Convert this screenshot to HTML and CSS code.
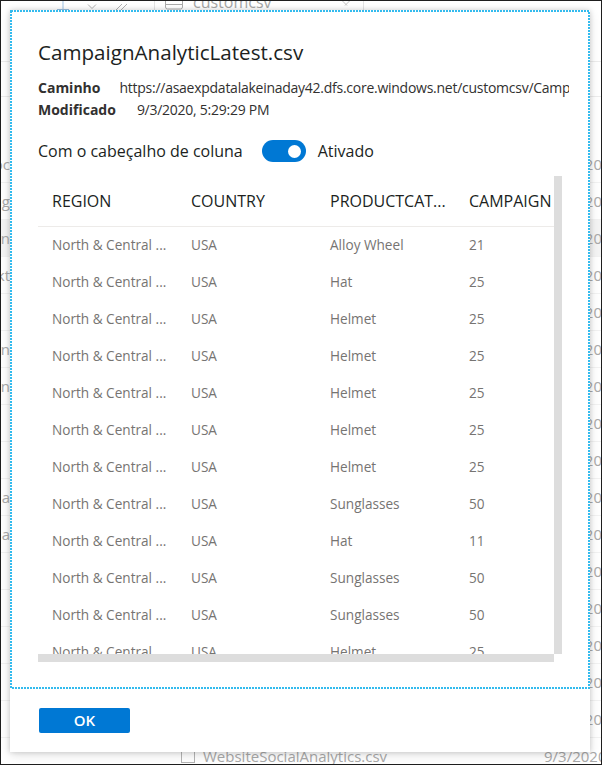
FILE: index.html
```html
<!DOCTYPE html>
<html lang="pt">
<head>
<meta charset="utf-8">
<title>CampaignAnalyticLatest.csv</title>
<link rel="stylesheet" href="styles.css">
</head>
<body>
<div class="screen">
  <div class="backdrop" aria-hidden="true">
    <div class="bg-toolbar">
      <svg class="ico ico-up" width="14" height="9" viewBox="0 0 14 9"><path d="M7 0V8M1 8.5H13" stroke="#9dc1e3" stroke-width="1" fill="none"/></svg>
      <svg class="ico ico-chev" width="10" height="9" viewBox="0 0 10 9"><path d="M1 3.5L5 7.5L9 3.5" stroke="#b0b0b0" stroke-width="1" fill="none"/></svg>
      <svg class="ico ico-edit" width="13" height="9" viewBox="0 0 13 9"><path d="M1 9L7 3M6 9L12 3" stroke="#b0b0b0" stroke-width="1" fill="none"/></svg>
      <span class="bg-div"></span>
      <svg class="ico ico-drive" width="18" height="9" viewBox="0 0 18 9"><rect x="0.5" y="-4" width="17" height="12" rx="2" stroke="#aaaaaa" fill="none"/><path d="M1 3.5H17" stroke="#aaaaaa"/></svg>
      <span class="bg-crumb">customcsv</span>
      <svg class="ico ico-x" width="8" height="9" viewBox="0 0 8 9"><path d="M0.5 0L5 4.5M7.5 0L3 4.5" stroke="#c0c0c0" fill="none"/></svg>
      <span class="bg-div"></span>
    </div>
    <div class="bg-head">
      <div class="bg-line bg-line-a"></div>
      <div class="bg-line bg-line-b"></div>
    </div>
    <div class="bg-rows">
      <div class="bg-row"><span class="bg-tail"><span>Saved Adhoc</span></span><span class="bg-date">2020</span></div>
      <div class="bg-row"><span class="bg-tail"><span>Billing</span></span><span class="bg-date">2020</span></div>
      <div class="bg-row bg-row-sel"><span class="bg-tail"><span>Campaign</span></span><span class="bg-date">2020</span></div>
      <div class="bg-row"><span class="bg-tail"><span>Mkt</span></span><span class="bg-date">2020</span></div>
      <div class="bg-row"><span class="bg-tail"><span></span></span><span class="bg-date">2020</span></div>
      <div class="bg-row"><span class="bg-tail"><span>Design</span></span><span class="bg-date">2020</span></div>
      <div class="bg-row"><span class="bg-tail"><span>Domain</span></span><span class="bg-date">2020</span></div>
      <div class="bg-row"><span class="bg-tail"><span></span></span><span class="bg-date">2020</span></div>
      <div class="bg-row"><span class="bg-tail"><span></span></span><span class="bg-date">2020</span></div>
      <div class="bg-row"><span class="bg-tail"><span>Fina</span></span><span class="bg-date">2020</span></div>
      <div class="bg-row"><span class="bg-tail"><span>Mana</span></span><span class="bg-date">2020</span></div>
      <div class="bg-row"><span class="bg-tail"><span></span></span><span class="bg-date">2020</span></div>
      <div class="bg-row"><span class="bg-tail"><span></span></span><span class="bg-date">2020</span></div>
      <div class="bg-row"><span class="bg-tail"><span></span></span><span class="bg-date">2020</span></div>
      <div class="bg-row"><span class="bg-tail"><span></span></span><span class="bg-date">2020</span></div>
      <div class="bg-row"><span class="bg-tail"><span></span></span><span class="bg-date">2020</span></div>
      <div class="bg-row bg-row-last"><span class="bg-tail"><span></span></span><span class="bg-check"></span><span class="bg-name">WebsiteSocialAnalytics.csv</span><span class="bg-date-full">9/3/2020</span></div>
    </div>
  </div>

  <div class="dialog" role="dialog" aria-label="CampaignAnalyticLatest.csv">
    <div class="focus">
      <svg class="focus-ring" aria-hidden="true"><rect class="ring-rect" x="1" y="1"/></svg>
      <h1 class="title">CampaignAnalyticLatest.csv</h1>
      <div class="meta">
        <div class="meta-row"><span class="meta-label">Caminho</span><span class="meta-value">https://asaexpdatalakeinaday42.dfs.core.windows.net/customcsv/Camp</span></div>
        <div class="meta-row"><span class="meta-label">Modificado</span><span class="meta-value">9/3/2020, 5:29:29 PM</span></div>
      </div>
      <div class="switch-row">
        <span class="switch-label">Com o cabeçalho de coluna</span>
        <span class="toggle" role="switch" aria-checked="true"><span class="knob"></span></span>
        <span class="switch-state">Ativado</span>
      </div>
      <div class="grid-frame">
        <div class="viewport">
          <table class="data">
            <thead>
              <tr><th>REGION</th><th>COUNTRY</th><th>PRODUCTCAT...</th><th>CAMPAIGN</th></tr>
            </thead>
            <tbody>
              <tr><td>North &amp; Central ...</td><td>USA</td><td>Alloy Wheel</td><td>21</td></tr>
              <tr><td>North &amp; Central ...</td><td>USA</td><td>Hat</td><td>25</td></tr>
              <tr><td>North &amp; Central ...</td><td>USA</td><td>Helmet</td><td>25</td></tr>
              <tr><td>North &amp; Central ...</td><td>USA</td><td>Helmet</td><td>25</td></tr>
              <tr><td>North &amp; Central ...</td><td>USA</td><td>Helmet</td><td>25</td></tr>
              <tr><td>North &amp; Central ...</td><td>USA</td><td>Helmet</td><td>25</td></tr>
              <tr><td>North &amp; Central ...</td><td>USA</td><td>Helmet</td><td>25</td></tr>
              <tr><td>North &amp; Central ...</td><td>USA</td><td>Sunglasses</td><td>50</td></tr>
              <tr><td>North &amp; Central ...</td><td>USA</td><td>Hat</td><td>11</td></tr>
              <tr><td>North &amp; Central ...</td><td>USA</td><td>Sunglasses</td><td>50</td></tr>
              <tr><td>North &amp; Central ...</td><td>USA</td><td>Sunglasses</td><td>50</td></tr>
              <tr><td>North &amp; Central ...</td><td>USA</td><td>Helmet</td><td>25</td></tr>
            </tbody>
          </table>
        </div>
        <div class="vbar"></div>
        <div class="hbar"></div>
        <div class="corner"></div>
      </div>
    </div>
    <div class="footer">
      <button class="ok" type="button">OK</button>
    </div>
  </div>
</div>
</body>
</html>
```

FILE: styles.css
```css
* { box-sizing: border-box; }

html, body {
  margin: 0;
  padding: 0;
  background: #ffffff;
}

body {
  font-family: "Open Sans", "Noto Sans", sans-serif;
  color: #201f1e;
}

.screen {
  position: relative;
  width: 602px;
  height: 765px;
  border: 1px solid #1e1e1e;
  overflow: hidden;
  background: #ffffff;
}

/* ---------- faded page behind the dialog ---------- */
.backdrop {
  color: #a9a9a9;
}

.bg-toolbar {
  display: flex;
  align-items: flex-end;
  height: 9px;
  overflow: hidden;
  padding-left: 55px;
}

.ico { flex: none; display: block; }
.ico-chev { margin-left: 17px; }
.ico-edit { margin-left: 18px; }
.ico-drive { margin-left: 10px; }
.ico-x { margin-left: 70px; align-self: flex-start; }

.bg-div {
  flex: none;
  width: 1px;
  height: 9px;
  background: #e3e3e3;
  margin-left: 26px;
}
.ico-x + .bg-div { margin-left: 13px; }

.bg-crumb {
  align-self: flex-start;
  margin-top: -7px;
  margin-left: 10px;
  font-size: 16px;
  line-height: 16px;
  color: #a6a6a6;
  white-space: nowrap;
}

.bg-head {
  height: 136px;
  padding-top: 51px;
}

.bg-line {
  height: 1px;
  background: #ececec;
}
.bg-line-b { margin-top: 34px; }

.bg-row {
  display: flex;
  align-items: center;
  height: 37px;
  font-size: 15px;
  white-space: nowrap;
  border-bottom: 1px solid #f2f2f2;
}

.bg-row-sel { background: #f4f4f4; }

.bg-tail {
  flex: none;
  width: 9px;
  overflow: hidden;
  display: flex;
  justify-content: flex-end;
}

.bg-date {
  margin-left: auto;
  margin-right: -1px;
}

.bg-check {
  flex: none;
  width: 14px;
  height: 14px;
  border: 1px solid #b5b5b5;
  margin-left: 171px;
}

.bg-name {
  flex: none;
  width: 341px;
  margin-left: 8px;
}

.bg-date-full { flex: none; }

/* ---------- dialog ---------- */
.dialog {
  position: absolute;
  left: 9px;
  top: 9px;
  width: 580px;
  height: 742px;
  background: #ffffff;
  box-shadow: 0 0 5px rgba(0, 0, 0, 0.16), 0 3px 10px rgba(0, 0, 0, 0.12);
  display: flex;
  flex-direction: column;
}

.focus {
  position: relative;
  height: 679px;
  padding: 28px 21px 0 28px;
  display: flex;
  flex-direction: column;
}

.focus-ring {
  position: absolute;
  left: 0;
  top: 0;
  width: 100%;
  height: 100%;
  pointer-events: none;
}

.ring-rect {
  width: calc(100% - 2px);
  height: calc(100% - 2px);
  fill: none;
  stroke: #33bbee;
  stroke-width: 2;
  stroke-dasharray: 2 1;
  shape-rendering: crispEdges;
}

.title {
  margin: 0;
  font-size: 20.6px;
  line-height: 28px;
  font-weight: 400;
  color: #201f1e;
}

.meta {
  margin-top: 11px;
  font-size: 14px;
  line-height: 22px;
}

.meta-row {
  display: flex;
  gap: 19px;
  white-space: nowrap;
}

.meta-label {
  flex: none;
  font-weight: 700;
  color: #323130;
}

.meta-row + .meta-row .meta-label { margin-right: 2px; }

.meta-value {
  flex: 1;
  min-width: 0;
  overflow: hidden;
  letter-spacing: -0.26px;
  color: #323130;
}

.switch-row {
  display: flex;
  align-items: center;
  height: 22px;
  margin-top: 19px;
  font-size: 16px;
  line-height: 22px;
  color: #201f1e;
}

.toggle {
  flex: none;
  position: relative;
  width: 44px;
  height: 22px;
  margin-left: 19px;
  border-radius: 11px;
  background: #0078d4;
}

.knob {
  position: absolute;
  right: 5px;
  top: 4.5px;
  width: 13px;
  height: 13px;
  border-radius: 50%;
  background: #ffffff;
}

.switch-state { margin-left: 12px; }

.grid-frame {
  margin-top: 14px;
  display: grid;
  grid-template-columns: 516px 8px;
  grid-template-rows: 478px 8px;
  width: 524px;
}

.viewport {
  overflow: hidden;
}

.vbar { background: #dddddd; }
.hbar { background: #dddddd; }
.corner { background: #ffffff; }

.data {
  border-collapse: collapse;
  table-layout: fixed;
  width: 556px;
}

.data th,
.data td {
  width: 139px;
  padding: 0 6px 0 14px;
  white-space: nowrap;
  overflow: hidden;
  text-align: left;
}

.data th {
  height: 50px;
  font-size: 16px;
  font-weight: 400;
  color: #201f1e;
  border-bottom: 1px solid #edebe9;
}

.data td {
  height: 37px;
  font-size: 13.6px;
  color: #767472;
}

.footer {
  padding: 19px 0 0 29px;
}

.ok {
  display: block;
  width: 91px;
  height: 25px;
  padding: 0;
  border: none;
  border-radius: 2px;
  background: #0078d4;
  color: #ffffff;
  font-family: "Open Sans", "Noto Sans", sans-serif;
  font-size: 15px;
  font-weight: 600;
  line-height: 25px;
  text-align: center;
}
```
